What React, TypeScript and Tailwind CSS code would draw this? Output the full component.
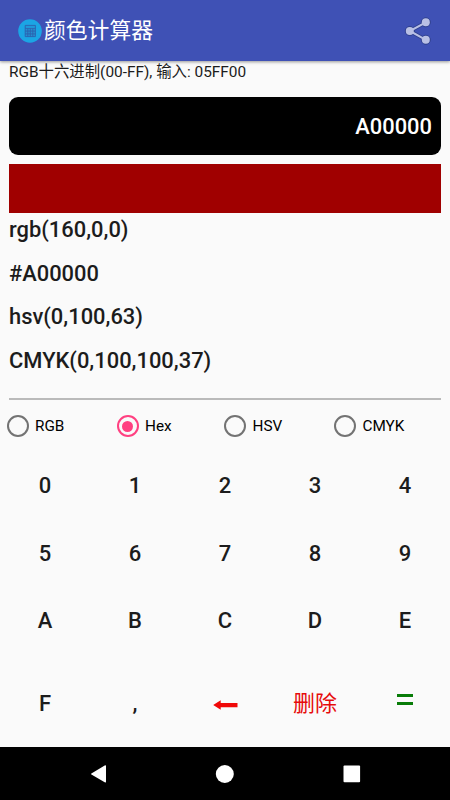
import React from "react";

const modes = [
  { label: "RGB", width: "w-[110px]" },
  { label: "Hex", width: "w-[107.5px]" },
  { label: "HSV", width: "w-[110px]" },
  { label: "CMYK", width: "w-[100px]" },
];

const results = ["rgb(160,0,0)", "#A00000", "hsv(0,100,63)", "CMYK(0,100,100,37)"];

const keys = ["0", "1", "2", "3", "4", "5", "6", "7", "8", "9", "A", "B", "C", "D", "E"];

function CalculatorLogo() {
  return (
    <svg className="h-6 w-6 shrink-0" viewBox="0 0 24 24">
      <circle cx="12" cy="12" r="11.8" fill="#1ba5e4" />
      <path
        d="M7.2 6.4h10.2v11.2H7.2zM7.2 9.3h10.2M7.2 12.1h10.2M7.2 14.9h10.2M9.8 9.3v8.3M12.3 9.3v8.3M14.8 9.3v8.3"
        fill="#2590d0"
        stroke="#2b62b0"
        strokeWidth="0.9"
      />
      <rect x="8" y="7.1" width="8.6" height="1.7" fill="#1f9bdb" />
    </svg>
  );
}

function ShareIcon() {
  return (
    <svg className="h-8 w-8" viewBox="0 0 32 32">
      <g fill="#30418f" stroke="#30418f">
        <path d="M23.8 7.3 7.8 16l16 8.8" fill="none" strokeWidth="3.8" />
        <circle cx="23.8" cy="7.3" r="4.5" />
        <circle cx="7.8" cy="16" r="4.5" />
        <circle cx="23.8" cy="24.8" r="4.5" />
      </g>
      <g fill="#b9c0e5">
        <path d="M23.8 7.3 7.8 16l16 8.8" fill="none" stroke="#b9c0e5" strokeWidth="2" />
        <circle cx="23.8" cy="7.3" r="4" />
        <circle cx="7.8" cy="16" r="4" />
        <circle cx="23.8" cy="24.8" r="4" />
      </g>
    </svg>
  );
}

export default function App() {
  return (
    <div className="flex h-[800px] w-[450px] flex-col overflow-hidden bg-[#fafafa] font-['Roboto','Noto_Sans_CJK_SC',sans-serif] text-[#1c1c1c]">
      <header className="flex h-[61px] shrink-0 items-center justify-between bg-[#3f51b5] pr-4 pl-[18px] shadow-[0_1px_3px_rgba(0,0,0,0.4)]">
        <div className="flex items-center gap-[2px]">
          <CalculatorLogo />
          <h1 className="pt-px text-[21.8px] leading-[30px] text-white">颜色计算器</h1>
        </div>
        <ShareIcon />
      </header>

      <main className="flex flex-col px-[9px]">
        <p className="h-[36px] text-[15.4px] leading-[23px]">RGB十六进制(00-FF), 输入: 05FF00</p>
        <div className="flex h-[58px] items-center justify-end rounded-[9px] bg-black pt-[2px] pr-[9px] text-[21.9px] font-medium text-white">
          A00000
        </div>
        <div className="mt-[9px] h-[49px] bg-[#a00000]" />
        <div className="flex h-[185px] flex-col gap-[11.6px] pt-px text-[21.9px] font-medium">
          {results.map((r) => (
            <p key={r} className="h-8 shrink-0 leading-8">{r}</p>
          ))}
        </div>
        <div className="h-[2px] bg-[#bababa]" />
      </main>

      <div className="flex h-[52px] shrink-0 items-center pl-[6.5px]">
        {modes.map((m) => (
          <label key={m.label} className={`flex items-center gap-[6.5px] text-[15.3px] text-black ${m.width}`}>
            <span
              className={`flex h-[22px] w-[22px] shrink-0 items-center justify-center rounded-full border-2 ${
                m.label === "Hex" ? "border-[#ff4081]" : "border-[#737373]"
              }`}
            >
              {m.label === "Hex" && <span className="h-[11px] w-[11px] rounded-full bg-[#ff4081]" />}
            </span>
            {m.label}
          </label>
        ))}
      </div>

      <div className="grid shrink-0 grid-cols-5 auto-rows-[67.5px] text-center text-[22px] leading-[67px] font-medium">
        {keys.map((k) => (
          <button key={k} type="button">{k}</button>
        ))}
      </div>
      <div className="grid h-[92px] shrink-0 grid-cols-5 items-center text-center text-[22px] leading-[30px] font-medium">
        <button type="button" className="pt-[7px]">F</button>
        <button type="button" className="pt-[7px]">,</button>
        <button type="button" className="flex justify-center pt-[8px]">
          <svg className="h-[10px] w-[25px]" viewBox="0 0 25 10">
            <path d="M0.2 5 7.7 0.3V2.9H24.5V7.2H7.7V9.7Z" fill="#f00808" />
          </svg>
        </button>
        <button type="button" className="pt-[7px] font-normal text-[#e60b0b]">删除</button>
        <button type="button" className="flex flex-col items-center gap-[5px] pb-[3px]" aria-label="=">
          <span className="h-[3px] w-4 bg-[#087c08]" />
          <span className="h-[3px] w-4 bg-[#087c08]" />
        </button>
      </div>

      <nav className="flex flex-1 items-center bg-black">
        <svg className="h-[53px] w-full" viewBox="0 0 450 53" fill="white">
          <path d="M104.7 18.6Q106 17.8 106 19V34.8Q106 36 104.7 35.3L91.4 27.5Q90.6 27 91.4 26.5Z" />
          <circle cx="224.8" cy="27" r="9" />
          <rect x="343.5" y="18.6" width="16.6" height="16.6" rx="1" />
        </svg>
      </nav>
    </div>
  );
}
